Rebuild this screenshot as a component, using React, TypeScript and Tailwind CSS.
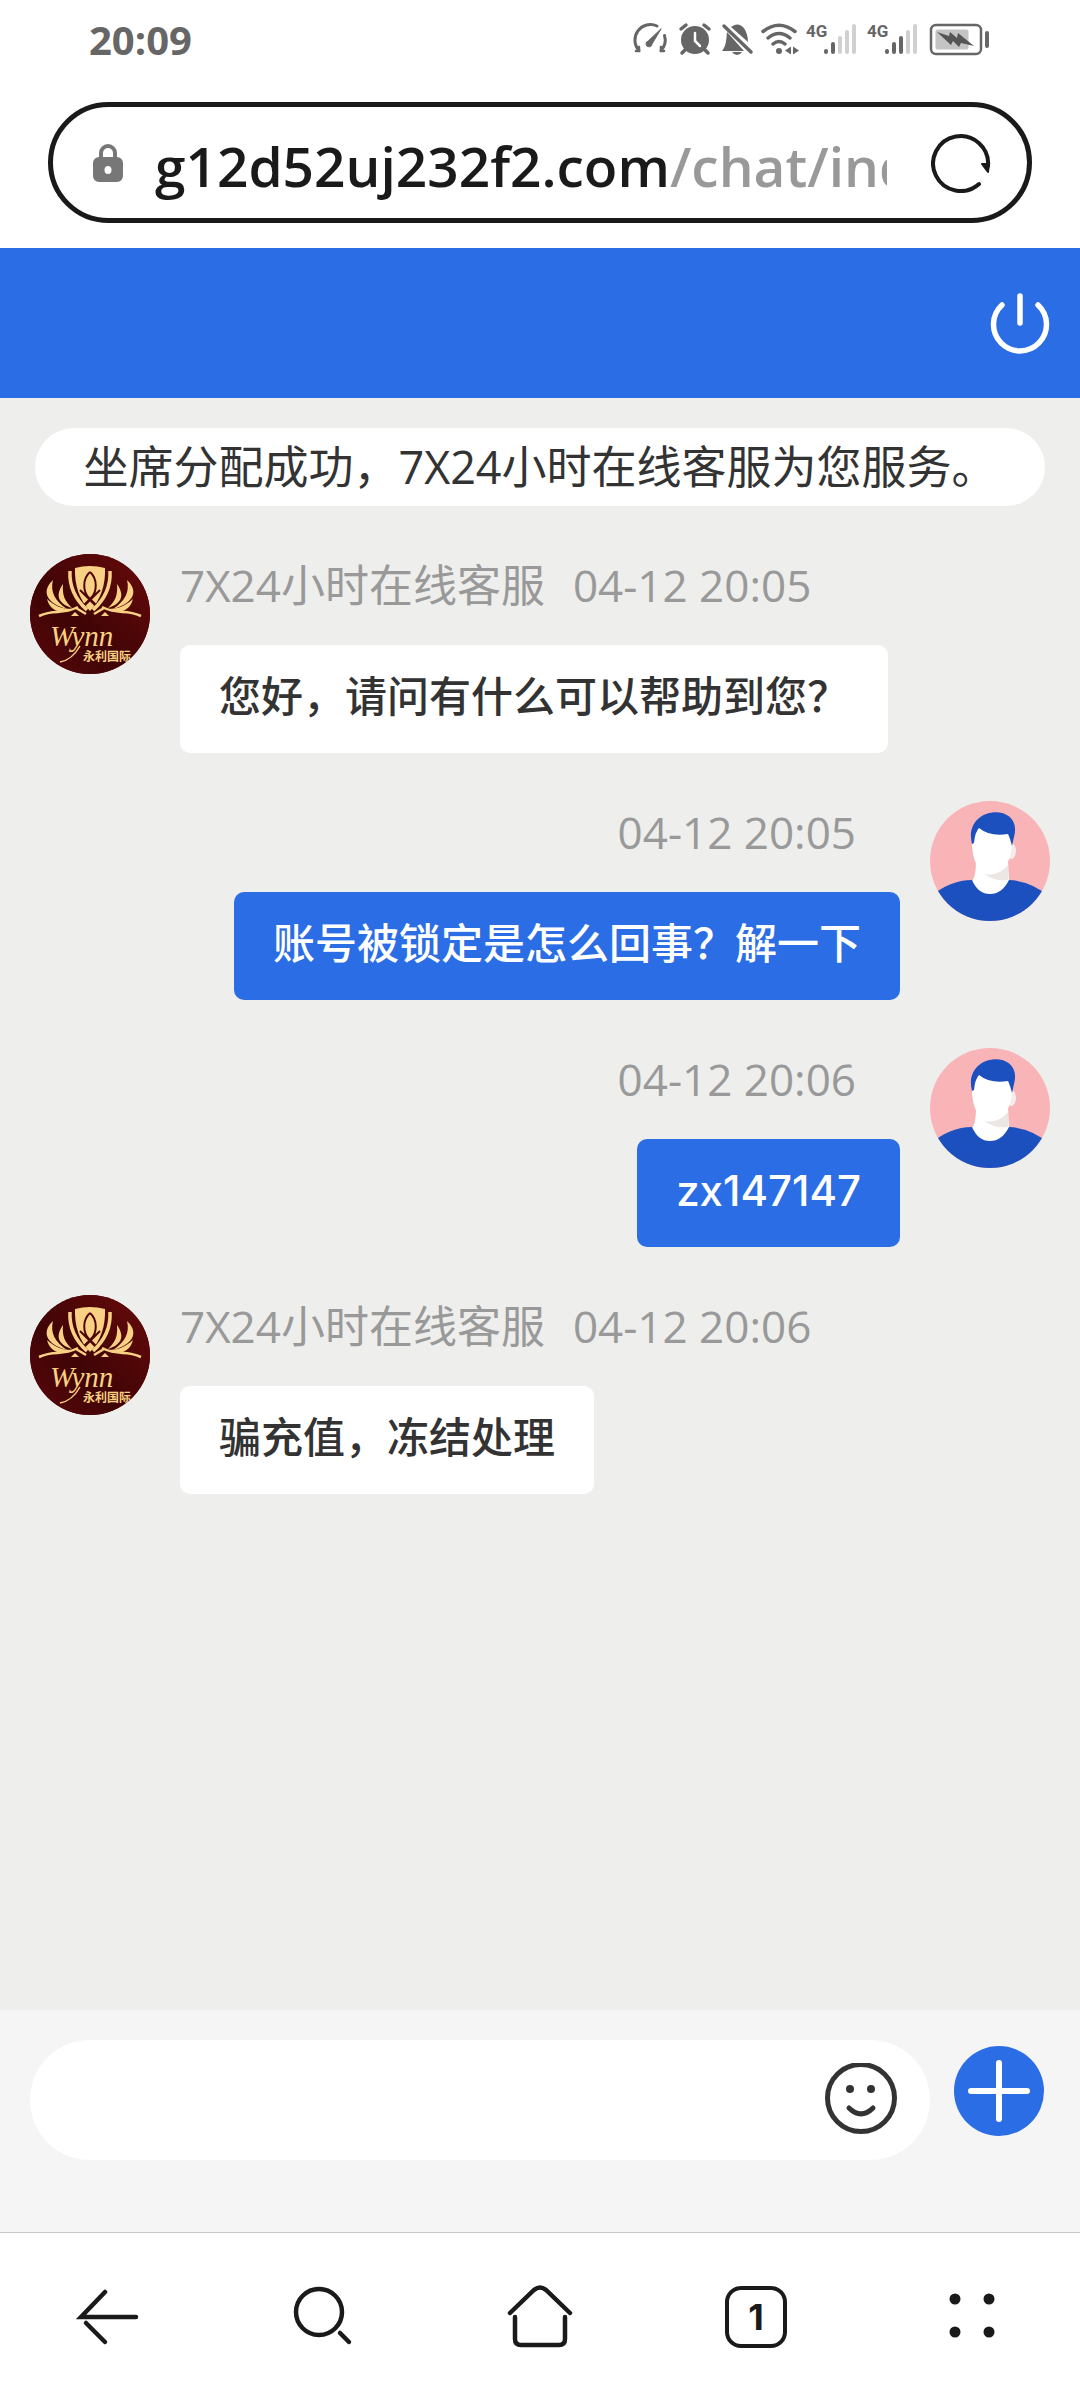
import React from 'react';

const SystemIcons: React.FC = () => (
  <svg className="h-10 w-[360px]" viewBox="632 20 360 40" fill="none" stroke="#666" strokeWidth="3" strokeLinecap="round" aria-hidden="true">
    {/* speed */}
    <path d="M639 50.5A15.5 15.5 0 0 1 657 26M664.5 35.5A15.5 15.5 0 0 1 661 50.5" />
    <path d="M639 47v4h-3M661 47v4h3" strokeWidth="2.5" />
    <path d="M661 29L652 44A3 3 0 1 1 648 41Z" fill="#666" strokeWidth="1" strokeLinejoin="round" />
    {/* alarm */}
    <circle cx="695" cy="40" r="14" fill="#666" stroke="none" />
    <path d="M681 29l5-4M709 29l-5-4M685 50l-3 3M705 50l3 3" strokeWidth="3.5" />
    <path d="M695 33v8l5 5" stroke="#fff" strokeWidth="2.5" />
    {/* muted bell */}
    <path d="M727 32C726 42 726 46 722 51H744ZM731 27C739 20 748 28 748 42Z" fill="#666" stroke="none" />
    <path d="M724 26L751 52" strokeWidth="3.5" />
    <path d="M732 52h10q-2 3-5 3t-5-3z" fill="#666" stroke="none" />
    {/* wifi */}
    <path d="M763 31.5Q779 19 795 31.5M768 38Q779 29 790 38M773 44Q779 39 785 44" strokeWidth="3.5" />
    <circle cx="779" cy="51" r="3" fill="#666" stroke="none" />
    <path d="M785 50.5l6-4v8zM799 50.5l-6-4v8z" fill="#666" stroke="none" />
    {/* mobile signals */}
    <g fill="#666" stroke="none" fontFamily="Roboto, sans-serif" fontSize="17" fontWeight="700">
      <text x="806" y="37">4G</text>
      <text x="867" y="37">4G</text>
    </g>
    <path d="M826 51v1M833 44v8" strokeWidth="4" />
    <path d="M840 38v14M847 32v20M854 26v26" strokeWidth="4" stroke="#d0d0d0" />
    <path d="M887 51v1M894 44v8M901 38v14" strokeWidth="4" />
    <path d="M908 32v20M915 26v26" strokeWidth="4" stroke="#d0d0d0" />
    {/* battery */}
    <rect x="931" y="25" width="50" height="29" rx="5" strokeWidth="2.5" />
    <rect x="935.5" y="29.5" width="33" height="20" rx="2" fill="#c4c4c4" stroke="none" />
    <path d="M937 32l12 4 1-4 7 6 1-5 16 13-13-3-2 4-6-6-2 4z" fill="#555" stroke="none" />
    <path d="M987 33v13" strokeWidth="4" />
  </svg>
);

const StaffAvatar: React.FC = () => (
  <svg className="size-30 shrink-0 rounded-full bg-[#4f0507]" viewBox="0 0 120 120" fill="#f8d184" role="img" aria-label="Wynn">
    <defs>
      <linearGradient id="maroon" x1="1" y1="0" x2="0" y2="1">
        <stop offset="0" stopColor="#690a0a" />
        <stop offset="0.6" stopColor="#3f0406" />
        <stop offset="1" stopColor="#5c080a" />
      </linearGradient>
    </defs>
    <rect width="120" height="120" fill="url(#maroon)" />
    <path d="M45 14q15-4 30 0q1 26-15 43Q44 40 45 14z" />
    <path d="M60 18c-8 7-7 20-1 26l11 11M60 18c8 7 7 20 1 26L50 55M50 36l17 17M70 36L53 53" fill="none" stroke="#4f0507" strokeWidth="2" />
    <path d="M40 17C39 34 46 46 57 56M80 17C81 34 74 46 63 56" fill="none" stroke="#f8d184" strokeWidth="3.5" />
    <path d="M23 26C10 38 18 50 37 55 25 47 20 38 23 26zM33 30C24 43 30 50 42 54 35 47 32 42 33 30zM97 26C110 38 102 50 83 55 95 47 100 38 97 26zM87 30C96 43 90 50 78 54 85 47 88 42 87 30z" />
    <path d="M17 45C20 58 34 61 42 55 32 55 25 52 17 45zM103 45C100 58 86 61 78 55 88 55 95 52 103 45z" />
    <path d="M9 62C26 54 30 62 48 53M46 54l10 6M111 62C94 54 90 62 72 53M74 54l-10 6" fill="none" stroke="#f8d184" strokeWidth="2.5" />
    <path d="M41 62l4-4 4 4zM71 62l4-4 4 4z" />
    <text x="20" y="92" fontFamily="'Liberation Serif', serif" fontStyle="italic" fontSize="29">Wynn</text>
    <path d="M50 92q-8 14-20 16" fill="none" stroke="#f8d184" strokeWidth="1.5" />
    <text x="53" y="107" fontFamily="'Noto Sans CJK SC', sans-serif" fontSize="12" fontWeight="700">永利国际</text>
  </svg>
);

const VisitorAvatar: React.FC = () => (
  <svg className="size-30 shrink-0 rounded-full bg-[#f9b4b8]" viewBox="0 0 120 120" role="img" aria-label="我">
    <path d="M46 60h32l1 20v16H42V80q4-4 4-20z" fill="#fff" />
    <path d="M54 73q14 3 24-9v15q-12 2-24-6z" fill="#ece7e5" />
    <ellipse cx="81" cy="50" rx="5" ry="8" fill="#f6ecec" />
    <path d="M42 40c0 20 6 32 19 32s21-12 21-32V26H44z" fill="#fff" />
    <path d="M42 43C32 4 94 0 84 36l-2 9q-2-8-4-12-18 3-29-6-4 4-5 15z" fill="#1c50bf" />
    <path d="M0 120V96Q20 79 42 79q6 14 18 14t19-14q22 1 41 17v24z" fill="#1c50bf" />
  </svg>
);

interface Message {
  id: number;
  mine: boolean;
  time: string;
  text: string;
}

const messages: Message[] = [
  { id: 1, mine: false, time: '04-12 20:05', text: '您好，请问有什么可以帮助到您？' },
  { id: 2, mine: true, time: '04-12 20:05', text: '账号被锁定是怎么回事？解一下' },
  { id: 3, mine: true, time: '04-12 20:06', text: 'zx147147' },
  { id: 4, mine: false, time: '04-12 20:06', text: '骗充值，冻结处理' },
];

const MessageItem: React.FC<{ message: Message }> = ({ message }) => {
  const { mine, time, text } = message;

  return (
    <li className={`flex items-start gap-[30px] ${mine ? 'flex-row-reverse' : ''}`}>
      {mine ? <VisitorAvatar /> : <StaffAvatar />}
      <div className={`flex min-w-0 flex-col ${mine ? 'items-end' : 'items-start'}`}>
        <div className={`mb-7 flex gap-7 text-[44px] leading-[63px] text-[#999] ${mine ? 'pr-11' : ''}`}>
          {!mine && <span>7X24小时在线客服</span>}
          <time>{time}</time>
        </div>
        <p
          className={`rounded-[10px] px-[39px] pt-[22px] pb-[26px] font-['Inter','Noto_Sans_CJK_SC',sans-serif] text-[42px] leading-[60px] font-medium ${
            mine ? 'bg-[#2b6de5] text-white' : 'bg-white text-[#333]'
          }`}
        >
          {text}
        </p>
      </div>
    </li>
  );
};

const navIcon = 'size-16';

const App: React.FC = () => {
  return (
    <div className="flex min-h-screen flex-col bg-white font-['Open_Sans','Noto_Sans_CJK_SC',sans-serif]">
      <div className="flex items-center justify-between pt-5 pr-[88px] pl-[89px]">
        <time className="text-[40px] leading-10 font-bold text-[#666]">20:09</time>
        <SystemIcons />
      </div>

      <div className="mx-12 mt-[42px] mb-[25px] flex h-[121px] items-center rounded-full border-5 border-[#1a1a1a] pr-9 pl-10">
        <svg className="h-10 w-[30px] shrink-0" viewBox="0 0 30 40" fill="none" aria-hidden="true">
          <path d="M8 18V10a7 7 0 0 1 14 0v8" stroke="#777" strokeWidth="4" />
          <path fillRule="evenodd" d="M6 14h18a6 6 0 0 1 6 6v13a6 6 0 0 1-6 6H6a6 6 0 0 1-6-6V20a6 6 0 0 1 6-6zm9 9a3.5 4 0 0 0 0 8a3.5 4 0 0 0 0-8z" fill="#777" />
        </svg>
        <a href="#" className="ml-8 min-w-0 flex-1 overflow-hidden pt-1.5 text-[55px] leading-[80px] font-semibold whitespace-nowrap text-[#1a1a1a]">
          g12d52uj232f2.com<span className="text-[#999]">/chat/index</span>
        </a>
        <button aria-label="刷新" className="ml-11 shrink-0">
          <svg className="size-[60px]" viewBox="0 0 60 60" fill="none" stroke="#1a1a1a" strokeWidth="4" strokeLinecap="round">
            <path d="M48 51A27.5 27.5 0 1 1 57 33" />
            <path d="M51 31h7l-1 8z" fill="#1a1a1a" strokeWidth="2" strokeLinejoin="round" />
          </svg>
        </button>
      </div>

      <header className="flex h-[150px] items-center justify-end bg-[#2b6de5] pr-7">
        <button aria-label="结束会话">
          <svg className="size-16" viewBox="0 0 64 64" fill="none" stroke="#fff" strokeWidth="5.5" strokeLinecap="round">
            <path d="M32 5v27M14 14a26.5 26.5 0 1 0 36 0" />
          </svg>
        </button>
      </header>

      <main className="flex-1 bg-[#eeeeec] px-[30px] pt-[30px] pb-12">
        <p className="mx-auto mb-12 w-fit rounded-full bg-white px-12 text-[45px] leading-[78px] text-[#333]">
          坐席分配成功，7X24小时在线客服为您服务。
        </p>
        <ul className="flex flex-col gap-12">
          {messages.map((message) => (
            <MessageItem key={message.id} message={message} />
          ))}
        </ul>
      </main>

      <form className="flex items-start gap-6 bg-[#f5f5f5] pt-[30px] pr-9 pb-[72px] pl-[30px]">
        <div className="flex h-30 flex-1 items-center rounded-full bg-white pr-8 pl-10">
          <input type="text" aria-label="消息" className="min-w-0 flex-1 text-[42px] outline-none" />
          <button type="button" aria-label="表情">
            <svg className="size-[74px]" viewBox="0 0 74 74" fill="none" stroke="#333" strokeWidth="5" strokeLinecap="round">
              <circle cx="37" cy="35" r="33.5" />
              <circle cx="26" cy="26" r="4" fill="#333" stroke="none" />
              <circle cx="47" cy="26" r="4" fill="#333" stroke="none" />
              <path d="M25 45q12 12 24 0" />
            </svg>
          </button>
        </div>
        <button type="button" aria-label="更多" className="mt-1.5 rounded-full bg-[#2b6de5]">
          <svg className="size-[90px]" viewBox="0 0 90 90" stroke="#fff" strokeWidth="6" strokeLinecap="round">
            <path d="M45 17v56M17 45h56" />
          </svg>
        </button>
      </form>

      <nav className="grid h-[168px] grid-cols-5 place-items-center border-t border-[#c8c8c8] text-[#1a1a1a]">
        <button aria-label="后退">
          <svg className={navIcon} viewBox="0 0 64 64" fill="none" stroke="currentColor" strokeWidth="4.5" strokeLinecap="round">
            <path d="M60 32H5L29 7" />
            <path d="M10 38L29 57" />
          </svg>
        </button>
        <button aria-label="搜索">
          <svg className={navIcon} viewBox="0 0 64 64" fill="none" stroke="currentColor" strokeWidth="4.5" strokeLinecap="round">
            <circle cx="27" cy="27" r="23" />
            <path d="M48 48l9 9" />
          </svg>
        </button>
        <button aria-label="主页">
          <svg className="size-[68px]" viewBox="0 0 68 68" fill="none" stroke="currentColor" strokeWidth="4.5" strokeLinecap="round">
            <path d="M4 30L28 7q6-5 12 0L64 30" />
            <path d="M9 34V56q0 6 6 6H53q6 0 6-6V34" />
          </svg>
        </button>
        <button aria-label="标签页" className="size-[62px] rounded-2xl border-4 border-current font-['Inter',sans-serif] text-[36px] leading-[54px] font-bold">
          1
        </button>
        <button aria-label="菜单">
          <svg className={navIcon} viewBox="0 0 64 64" fill="currentColor">
            <circle cx="15" cy="14" r="5.5" />
            <circle cx="49" cy="14" r="5.5" />
            <circle cx="15" cy="47" r="5.5" />
            <circle cx="49" cy="47" r="5.5" />
          </svg>
        </button>
      </nav>
    </div>
  );
};

export default App;
